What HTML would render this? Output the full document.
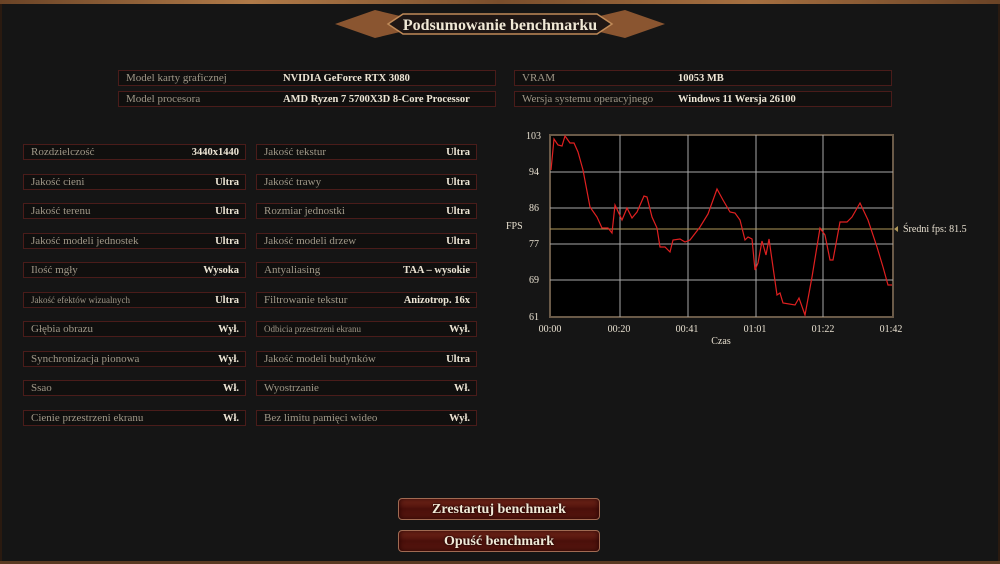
<!DOCTYPE html>
<html><head><meta charset="utf-8"><style>
*{margin:0;padding:0;box-sizing:border-box}
body{width:1000px;height:564px;background:#151515;position:relative;overflow:hidden;font-family:"Liberation Serif",serif;color:#d8d0c0}
.topbar{position:absolute;left:0;top:0;width:1000px;height:4px;background:linear-gradient(90deg,#6a4326,#b07a48,#7a4e2c,#a56f40,#6a4326)}
.botbar{position:absolute;left:0;bottom:0;width:1000px;height:3px;background:#5a3a22}
.sidel{position:absolute;left:0;top:4px;width:2px;height:557px;background:#2a1a10}
.sider{position:absolute;right:0;top:4px;width:2px;height:557px;background:#2a1a10}
.box{position:absolute;height:16px;background:#100f0e;border:1px solid #4a1c1a;font-size:11px;line-height:15px}
.box .l{position:absolute;left:7px;top:0;color:#a09888}
.box .v{position:absolute;right:6px;top:0;color:#eee6d6;font-weight:bold;font-size:10.5px}
.info .v{right:auto}
.btn{position:absolute;left:398px;width:202px;height:22px;border-radius:4px;border:1px solid #a06a52;background:linear-gradient(180deg,#7a2a1c,#4a0f0a 50%,#5a1810);box-shadow:inset 0 0 6px #200;color:#f2ead8;font-size:14px;font-weight:bold;text-align:center;line-height:21px;text-shadow:0 0 2px #000}
</style></head><body>
<div class="topbar"></div><div class="sidel"></div><div class="sider"></div><div class="botbar"></div>
<svg style="position:absolute;left:330px;top:6px" width="340" height="36">
<polygon points="5,18 45,4 70,10 270,10 295,4 335,18 295,32 270,26 70,26 45,32" fill="#8a5530"/>
<polygon points="58,18 73,8 267,8 282,18 267,28 73,28" fill="#1e1614" stroke="#c08a58" stroke-width="1.5"/>
<text x="170" y="24" text-anchor="middle" font-family="Liberation Serif" font-weight="bold" font-size="16" fill="#f0e8d6">Podsumowanie benchmarku</text>
</svg>

<div class="box info" style="left:118px;top:70px;width:378px"><span class="l">Model karty graficznej</span><span class="v" style="left:164px">NVIDIA GeForce RTX 3080</span></div>
<div class="box info" style="left:118px;top:91px;width:378px"><span class="l">Model procesora</span><span class="v" style="left:164px">AMD Ryzen 7 5700X3D 8-Core Processor</span></div>
<div class="box info" style="left:514px;top:70px;width:378px"><span class="l">VRAM</span><span class="v" style="left:163px">10053 MB</span></div>
<div class="box info" style="left:514px;top:91px;width:378px"><span class="l">Wersja systemu operacyjnego</span><span class="v" style="left:163px">Windows 11 Wersja 26100</span></div>

<div class="box" style="left:23px;top:144px;width:223px"><span class="l">Rozdzielczość</span><span class="v">3440x1440</span></div>
<div class="box" style="left:256px;top:144px;width:221px"><span class="l">Jakość tekstur</span><span class="v">Ultra</span></div>
<div class="box" style="left:23px;top:174px;width:223px"><span class="l">Jakość cieni</span><span class="v">Ultra</span></div>
<div class="box" style="left:256px;top:174px;width:221px"><span class="l">Jakość trawy</span><span class="v">Ultra</span></div>
<div class="box" style="left:23px;top:203px;width:223px"><span class="l">Jakość terenu</span><span class="v">Ultra</span></div>
<div class="box" style="left:256px;top:203px;width:221px"><span class="l">Rozmiar jednostki</span><span class="v">Ultra</span></div>
<div class="box" style="left:23px;top:233px;width:223px"><span class="l">Jakość modeli jednostek</span><span class="v">Ultra</span></div>
<div class="box" style="left:256px;top:233px;width:221px"><span class="l">Jakość modeli drzew</span><span class="v">Ultra</span></div>
<div class="box" style="left:23px;top:262px;width:223px"><span class="l">Ilość mgły</span><span class="v">Wysoka</span></div>
<div class="box" style="left:256px;top:262px;width:221px"><span class="l">Antyaliasing</span><span class="v">TAA – wysokie</span></div>
<div class="box" style="left:23px;top:292px;width:223px"><span class="l" style="font-size:9px">Jakość efektów wizualnych</span><span class="v">Ultra</span></div>
<div class="box" style="left:256px;top:292px;width:221px"><span class="l">Filtrowanie tekstur</span><span class="v">Anizotrop. 16x</span></div>
<div class="box" style="left:23px;top:321px;width:223px"><span class="l">Głębia obrazu</span><span class="v">Wył.</span></div>
<div class="box" style="left:256px;top:321px;width:221px"><span class="l" style="font-size:9px">Odbicia przestrzeni ekranu</span><span class="v">Wył.</span></div>
<div class="box" style="left:23px;top:351px;width:223px"><span class="l">Synchronizacja pionowa</span><span class="v">Wył.</span></div>
<div class="box" style="left:256px;top:351px;width:221px"><span class="l">Jakość modeli budynków</span><span class="v">Ultra</span></div>
<div class="box" style="left:23px;top:380px;width:223px"><span class="l">Ssao</span><span class="v">Wł.</span></div>
<div class="box" style="left:256px;top:380px;width:221px"><span class="l">Wyostrzanie</span><span class="v">Wł.</span></div>
<div class="box" style="left:23px;top:410px;width:223px"><span class="l">Cienie przestrzeni ekranu</span><span class="v">Wł.</span></div>
<div class="box" style="left:256px;top:410px;width:221px"><span class="l">Bez limitu pamięci wideo</span><span class="v">Wył.</span></div>

<svg style="position:absolute;left:0;top:0" width="1000" height="564" font-family="Liberation Serif" font-size="10" fill="#e8e0d0">
<rect x="550" y="135" width="343" height="182" fill="#000" stroke="#6a5a48" stroke-width="2"/>
<g stroke="#a8a8a8" stroke-width="1">
<line x1="620" y1="135" x2="620" y2="317"/><line x1="688" y1="135" x2="688" y2="317"/><line x1="756" y1="135" x2="756" y2="317"/><line x1="823" y1="135" x2="823" y2="317"/>
<line x1="550" y1="172" x2="893" y2="172"/><line x1="550" y1="208" x2="893" y2="208"/><line x1="550" y1="244" x2="893" y2="244"/><line x1="550" y1="280" x2="893" y2="280"/>
</g>
<line x1="550" y1="229" x2="893" y2="229" stroke="#b0985a" stroke-width="1"/>
<polyline fill="none" stroke="#e02020" stroke-width="1.2" points="551,170 554,139 558,145 562,146 565,136 570,143 574,143 578,152 583,170 590,207 597,217 602,228 608,228 612,233 615,205 622,220 627,208 632,218 637,212 644,196 647,197 652,217 657,228 660,247 665,247 670,252 673,240 680,239 685,242 690,240 700,227 708,214 717,189 723,200 730,212 735,213 740,220 745,240 748,237 752,239 755,270 758,263 762,241 766,255 769,239 777,295 780,293 783,303 795,305 799,298 805,315 812,277 820,228 825,235 830,260 833,260 840,222 847,222 852,217 860,203 868,220 877,247 883,267 888,285 892,285"/>
<g text-anchor="end"><text x="541" y="139">103</text><text x="539" y="175">94</text><text x="539" y="211">86</text><text x="539" y="247">77</text><text x="539" y="283">69</text><text x="539" y="320">61</text></g>
<text x="506" y="229">FPS</text>
<g text-anchor="middle"><text x="550" y="332">00:00</text><text x="619" y="332">00:20</text><text x="687" y="332">00:41</text><text x="755" y="332">01:01</text><text x="823" y="332">01:22</text><text x="891" y="332">01:42</text><text x="721" y="344">Czas</text></g>
<polygon points="894,229 898,226 898,232" fill="#b0985a"/>
<text x="903" y="232">Średni fps:  81.5</text>
</svg>

<div class="btn" style="top:498px">Zrestartuj benchmark</div>
<div class="btn" style="top:530px">Opuść benchmark</div>
</body></html>
